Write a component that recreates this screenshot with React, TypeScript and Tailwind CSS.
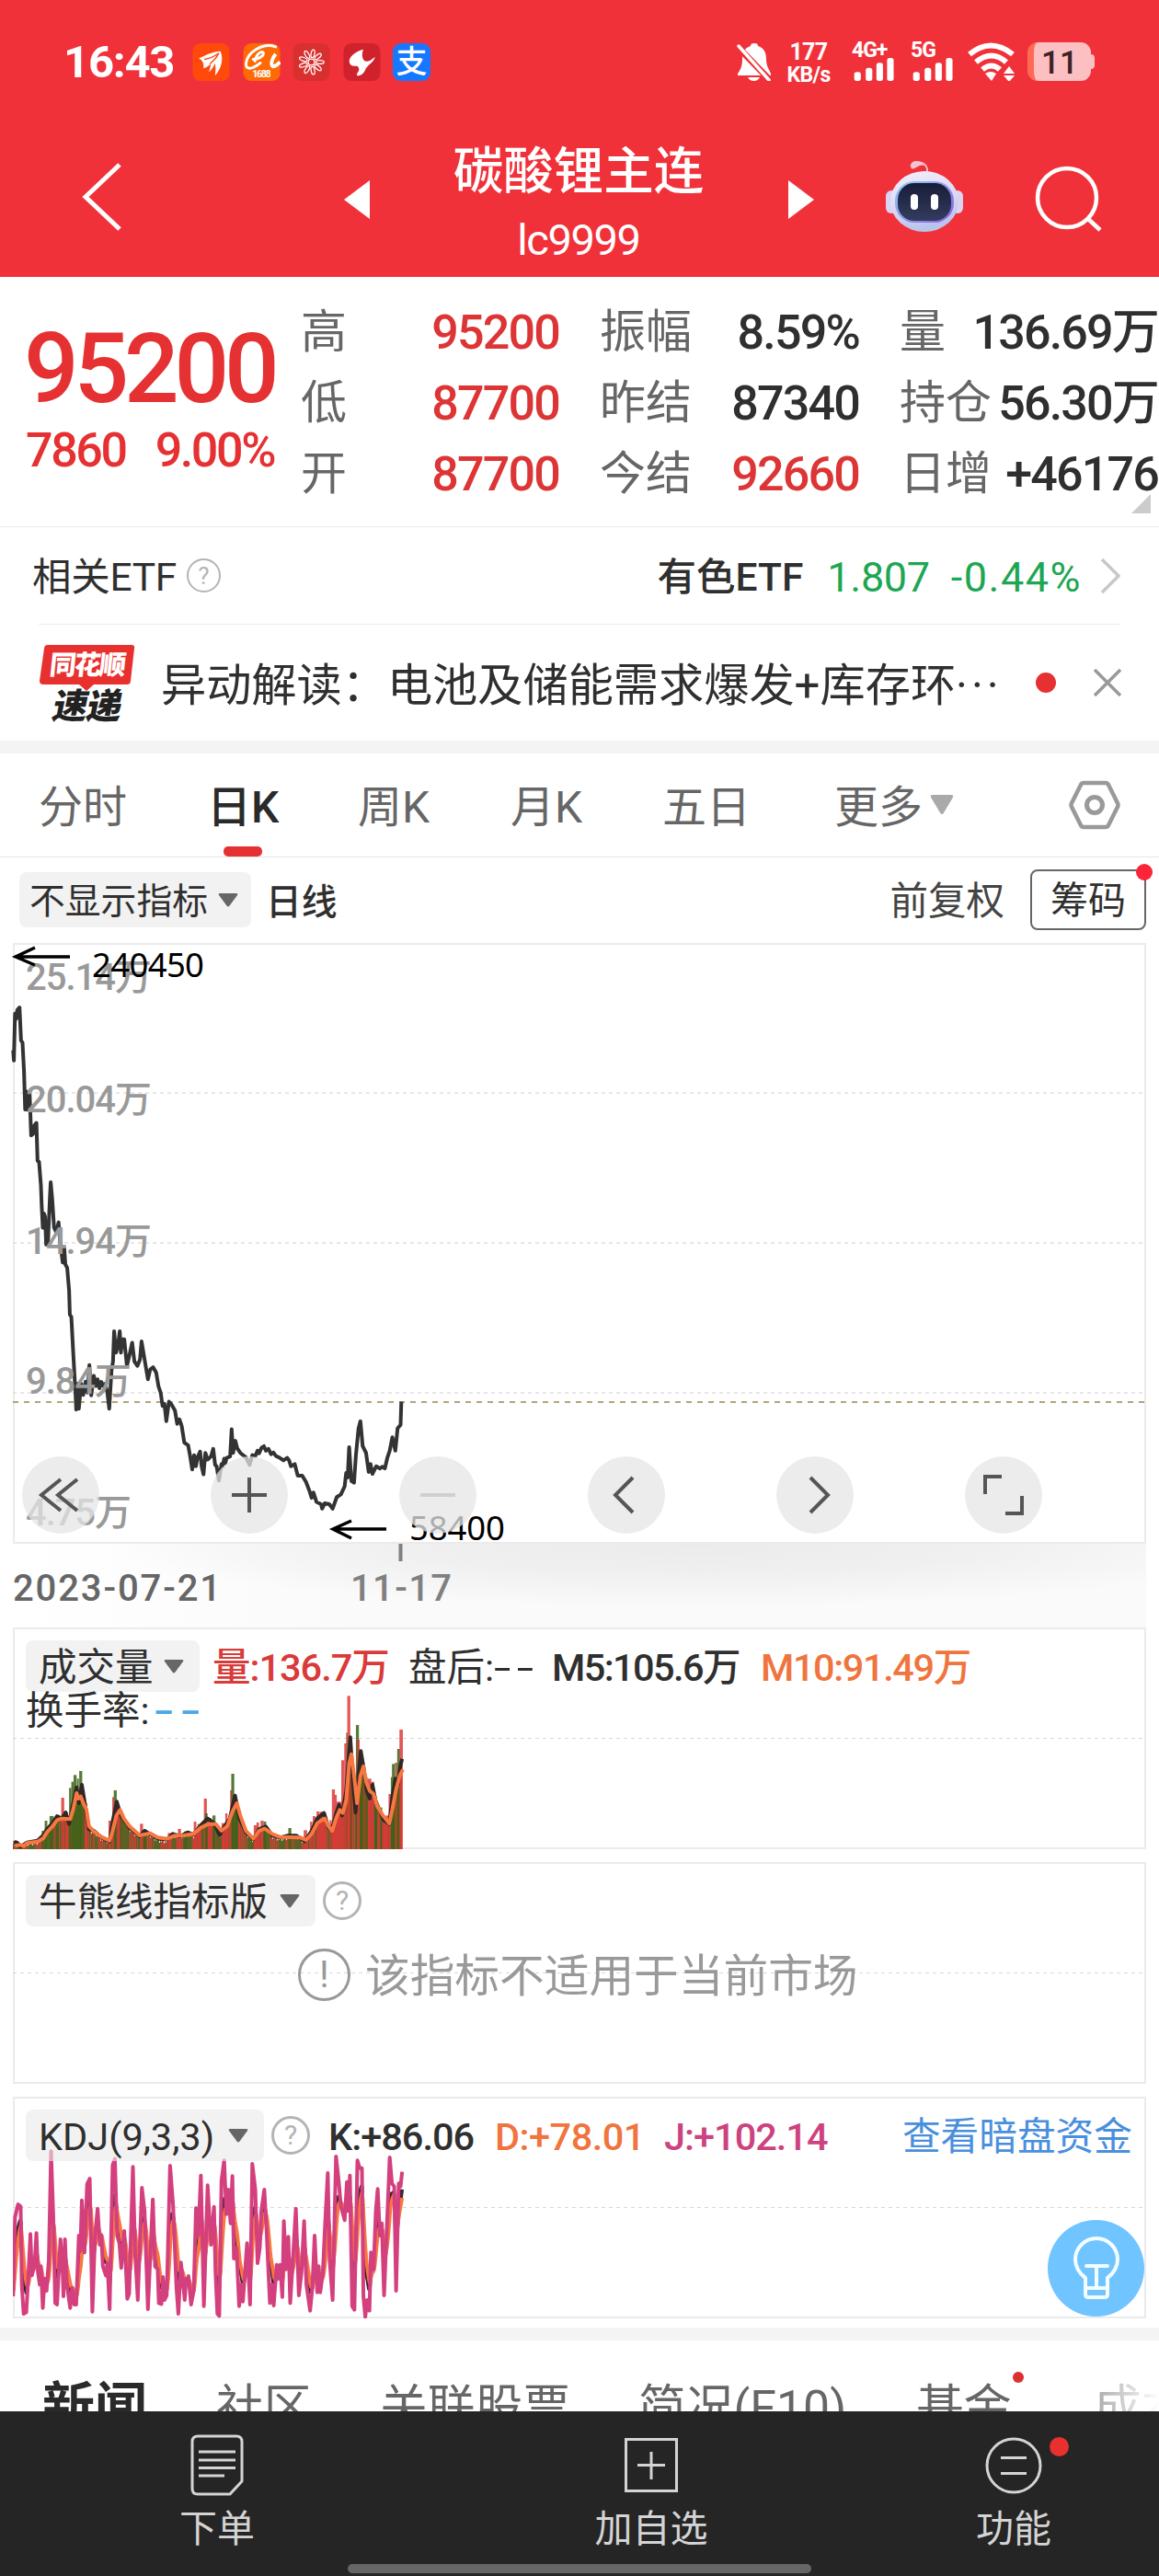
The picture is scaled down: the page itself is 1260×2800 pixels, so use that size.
import type { ReactNode } from "react";
import clsx from "clsx";

type Point = [number, number];

const PRICE: Point[] = [
  [35, 292], [37, 315], [40, 210], [43, 222], [46, 202], [52, 196], [56, 270], [60, 275], [64, 340], [67, 425],
  [71, 385], [73, 425], [79, 390], [83, 483], [88, 480], [92, 460], [97, 455], [100, 540], [104, 542], [109, 595],
  [111, 640], [114, 690], [117, 658], [120, 665], [123, 728], [128, 720], [133, 620], [135, 588], [139, 625], [144, 690],
  [150, 700], [156, 678], [160, 720], [167, 768], [171, 735], [174, 772], [179, 780], [184, 830], [186, 885], [190, 890],
  [196, 985], [201, 1060], [203, 1098], [208, 1040], [210, 1096], [216, 1040], [222, 1065], [228, 1035], [233, 1060], [238, 998],
  [243, 1066], [250, 1022], [256, 1045], [260, 1030], [265, 1050], [270, 1036], [275, 1045], [280, 1040], [286, 1060], [291, 1096],
  [297, 1010], [301, 990], [304, 922], [309, 970], [314, 955], [319, 922], [322, 970], [326, 940], [331, 940], [338, 1000],
  [345, 975], [352, 948], [358, 990], [366, 1000], [373, 985], [377, 945], [383, 975], [388, 1000], [394, 1030], [400, 1008],
  [408, 1003], [416, 1015], [422, 1045], [428, 1060], [433, 1090], [438, 1085], [443, 1124], [450, 1080], [458, 1088], [466, 1100],
  [472, 1130], [478, 1120], [484, 1135], [491, 1172], [501, 1178], [506, 1200], [512, 1232], [517, 1200], [522, 1225], [526, 1205],
  [533, 1192], [537, 1225], [542, 1243], [547, 1195], [553, 1210], [562, 1203], [568, 1186], [573, 1222], [577, 1225], [583, 1257],
  [590, 1220], [593, 1226], [597, 1208], [600, 1218], [604, 1206], [613, 1203], [617, 1142], [621, 1195], [627, 1168], [632, 1185],
  [640, 1195], [655, 1205], [665, 1222], [672, 1200], [680, 1202], [686, 1190], [690, 1196], [697, 1183], [703, 1180], [708, 1190],
  [715, 1186], [722, 1198], [728, 1194], [735, 1202], [745, 1206], [755, 1212], [765, 1206], [770, 1212], [775, 1225], [785, 1220],
  [793, 1246], [805, 1246], [815, 1260], [825, 1282], [830, 1296], [835, 1284], [843, 1305], [855, 1310], [858, 1320], [865, 1308],
  [877, 1310], [886, 1320], [897, 1294], [908, 1288], [918, 1270], [922, 1240], [926, 1250], [930, 1182], [936, 1258], [943, 1262],
  [948, 1200], [955, 1140], [960, 1124], [966, 1180], [975, 1195], [982, 1238], [987, 1220], [992, 1242], [1002, 1225], [1012, 1230],
  [1018, 1226], [1025, 1230], [1032, 1205], [1038, 1190], [1045, 1160], [1053, 1190], [1059, 1140], [1067, 1132], [1069, 1080],
];

const MA5: Point[] = [
  [36, 730], [45, 728], [55, 742], [72, 728], [100, 722], [115, 705], [125, 685], [140, 665], [152, 642], [165, 650],
  [175, 630], [184, 668], [195, 600], [204, 548], [210, 600], [218, 540], [226, 600], [237, 685], [250, 690], [270, 712],
  [292, 725], [300, 660], [311, 595], [322, 640], [345, 680], [372, 708], [385, 690], [420, 716], [445, 718], [460, 700],
  [480, 708], [500, 695], [515, 702], [535, 672], [553, 650], [570, 665], [585, 704], [600, 672], [612, 650], [626, 575],
  [638, 650], [655, 695], [675, 718], [690, 685], [708, 676], [725, 705], [745, 712], [765, 706], [790, 706], [812, 724],
  [830, 690], [845, 650], [863, 632], [875, 680], [885, 680], [895, 635], [903, 605], [911, 640], [922, 560], [933, 385],
  [940, 520], [947, 630], [954, 520], [961, 430], [968, 480], [977, 560], [985, 585], [992, 540], [1000, 590], [1010, 620],
  [1022, 655], [1037, 668], [1045, 580], [1053, 520], [1060, 540], [1066, 480], [1071, 455],
];

const MA10: Point[] = [
  [40, 738], [55, 736], [63, 740], [72, 730], [100, 725], [115, 715], [125, 695], [140, 675], [152, 655], [165, 650],
  [187, 652], [195, 620], [204, 567], [209, 585], [215, 578], [222, 600], [230, 620], [237, 675], [250, 692], [270, 710],
  [292, 722], [300, 690], [310, 640], [320, 622], [330, 650], [345, 675], [372, 705], [400, 698], [420, 712], [445, 716],
  [465, 706], [490, 705], [515, 700], [535, 680], [555, 668], [575, 668], [590, 690], [605, 675], [620, 625], [631, 600],
  [640, 640], [655, 690], [675, 716], [690, 690], [705, 683], [725, 700], [745, 710], [800, 712], [815, 720], [830, 700],
  [845, 665], [865, 650], [875, 675], [885, 690], [895, 650], [905, 622], [913, 632], [922, 590], [930, 470], [936, 440],
  [944, 520], [951, 600], [960, 510], [968, 480], [975, 530], [985, 560], [995, 570], [1005, 610], [1020, 640], [1037, 666],
  [1045, 620], [1055, 555], [1065, 510], [1073, 490],
];

const RED = "#dc3838";
const GREEN = "#3a6316";

// x, top, width, colour
const SPIKES: [number, number, number, string][] = [
  [38, 720, 6, RED], [111, 690, 6, GREEN], [119, 657, 7, GREEN], [132, 642, 11, GREEN], [148, 640, 8, GREEN], [163, 582, 8, RED],
  [173, 630, 7, RED], [184, 550, 6, GREEN], [190, 530, 6, GREEN], [196, 508, 8, GREEN], [205, 520, 5, GREEN], [211, 495, 8, GREEN],
  [220, 570, 5, GREEN], [225, 600, 7, RED], [248, 688, 4, RED], [289, 657, 7, RED], [299, 580, 5, RED], [303, 558, 8, GREEN],
  [312, 610, 6, RED], [320, 640, 5, GREEN], [373, 667, 8, RED], [382, 686, 8, GREEN], [447, 697, 10, RED], [474, 684, 8, RED],
  [490, 692, 8, GREEN], [516, 660, 7, RED], [526, 668, 10, RED], [543, 585, 8, RED], [546, 633, 7, GREEN], [556, 648, 7, RED],
  [566, 640, 8, GREEN], [590, 665, 9, RED], [600, 633, 6, RED], [613, 558, 5, RED], [616, 504, 8, GREEN], [626, 590, 6, GREEN],
  [635, 632, 5, RED], [676, 672, 8, RED], [683, 663, 7, RED], [694, 657, 8, RED], [702, 660, 7, GREEN], [768, 681, 8, GREEN],
  [809, 688, 9, RED], [826, 660, 6, RED], [833, 642, 7, RED], [843, 627, 8, RED], [852, 628, 8, RED], [861, 636, 7, RED],
  [868, 660, 5, RED], [878, 655, 5, RED], [884, 555, 8, RED], [891, 573, 6, RED], [897, 595, 12, RED], [909, 460, 8, RED],
  [917, 405, 6, RED], [922, 370, 4, "#a04a24"], [925, 250, 8, RED], [932, 440, 6, "#7a4a1c"], [948, 345, 8, GREEN], [951, 393, 7, RED],
  [958, 450, 8, GREEN], [966, 480, 7, "#8a4a20"], [974, 515, 5, GREEN], [980, 520, 9, RED], [989, 530, 8, RED], [997, 600, 7, GREEN],
  [1005, 615, 6, RED], [1013, 614, 5, GREEN], [1019, 650, 9, RED], [1028, 640, 7, RED], [1035, 570, 7, RED], [1041, 515, 4, GREEN],
  [1044, 472, 8, GREEN], [1052, 468, 6, "#a04a24"], [1058, 423, 7, GREEN], [1064, 360, 9, RED],
];

const KDJ_J: Point[] = [
  [35, 678], [40, 420], [48, 378], [55, 385], [58, 640], [63, 735], [70, 730], [76, 600], [81, 475], [85, 610],
  [92, 575], [97, 472], [101, 600], [106, 640], [109, 580], [114, 716], [119, 620], [124, 660], [130, 560], [136, 205],
  [142, 420], [147, 700], [152, 705], [161, 492], [167, 600], [169, 678], [173, 492], [178, 640], [187, 716], [192, 650],
  [198, 705], [203, 705], [210, 480], [214, 530], [218, 365], [225, 535], [232, 312], [239, 294], [246, 728], [253, 480],
  [260, 392], [266, 510], [270, 480], [274, 580], [282, 610], [286, 570], [292, 720], [300, 250], [306, 230], [312, 480],
  [318, 505], [323, 585], [331, 465], [339, 686], [344, 670], [354, 256], [360, 540], [367, 690], [378, 324], [385, 400],
  [394, 720], [407, 362], [413, 580], [420, 590], [423, 700], [430, 703], [434, 615], [438, 690], [444, 675], [453, 252],
  [461, 380], [470, 650], [475, 735], [482, 568], [488, 640], [492, 690], [496, 620], [500, 635], [502, 612], [509, 705],
  [516, 660], [522, 390], [528, 480], [535, 284], [543, 710], [553, 316], [562, 510], [570, 386], [574, 600], [579, 735],
  [584, 742], [590, 300], [597, 235], [603, 410], [608, 330], [614, 440], [619, 286], [623, 555], [630, 520], [637, 710],
  [642, 640], [647, 695], [658, 505], [666, 705], [672, 246], [680, 330], [686, 570], [692, 520], [696, 400], [704, 330],
  [710, 460], [715, 600], [719, 700], [724, 640], [729, 708], [737, 575], [742, 620], [746, 575], [752, 680], [756, 433],
  [762, 590], [768, 484], [773, 700], [780, 560], [788, 392], [796, 675], [803, 600], [810, 433], [816, 640], [826, 725],
  [832, 650], [838, 480], [845, 665], [849, 580], [853, 665], [860, 600], [866, 440], [873, 276], [878, 560], [886, 690],
  [895, 222], [902, 300], [908, 385], [918, 430], [924, 305], [928, 400], [932, 284], [938, 710], [944, 722], [952, 235],
  [958, 260], [964, 260], [968, 680], [973, 745], [978, 690], [984, 725], [988, 535], [995, 590], [1001, 400], [1006, 328],
  [1012, 480], [1017, 440], [1023, 675], [1038, 225], [1044, 310], [1050, 320], [1055, 660], [1062, 310], [1067, 320], [1071, 272],
];

const toPoints = (points: Point[]) => points.map((p) => p.join(",")).join(" ");

function valueAt(points: Point[], x: number) {
  const i = points.findIndex((p) => p[0] >= x);
  if (i === 0) return points[0][1];
  if (i < 0) return points[points.length - 1][1];
  const [x0, y0] = points[i - 1];
  const [x1, y1] = points[i];
  return y0 + ((y1 - y0) * (x - x0)) / (x1 - x0);
}

// K and D follow from J: J = 3K - 2D, D = 2/3 D' + 1/3 K
function kdLines() {
  const k: Point[] = [];
  const d: Point[] = [];
  let last = 650;
  for (let x = 35; x <= 1071; x += 1.84) {
    const j = valueAt(KDJ_J, x);
    last = (6 * last + j) / 7;
    d.push([x, last]);
    k.push([x, (j + 2 * last) / 3]);
  }
  return { k, d };
}

const { k: KDJ_K, d: KDJ_D } = kdLines();

const BARS = Array.from({ length: 424 }, (_, i) => {
  const x = 32 + i * 2.45;
  const noise = ((i * 7919) % 101) / 101;
  const top = valueAt(MA5, x) + 18 * (noise - 0.25);
  const tint = (i * 48271) % 17;
  return {
    x,
    top: Math.min(top, 742),
    color: tint < 5 ? "#c23a2c" : tint < 10 ? GREEN : tint < 14 ? "#8c471f" : "#6a4f18",
  };
});

function Line({ points, color, width = 4 }: { points: Point[]; color: string; width?: number }) {
  return (
    <polyline
      points={toPoints(points)}
      fill="none"
      stroke={color}
      strokeWidth={width}
      strokeLinejoin="round"
      vectorEffect="non-scaling-stroke"
    />
  );
}

function Caret({ className }: { className?: string }) {
  return (
    <svg viewBox="0 0 22 15" className={clsx("shrink-0", className)} fill="currentColor" preserveAspectRatio="none">
      <path d="M2 0h18q2 0 1 2l-8.500 11.500q-1.500 2-3 0L1 2q-1-2 1-2z" />
    </svg>
  );
}

function Help({ className }: { className?: string }) {
  return (
    <span
      className={clsx(
        "flex shrink-0 items-center justify-center rounded-full border-[#b4b4b4] text-[#b4b4b4] leading-none",
        className,
      )}
    >
      ?
    </span>
  );
}

function Signal({ label }: { label: string }) {
  return (
    <div className="flex h-[42px] w-[52px] flex-col justify-between">
      <span className="text-[23px] leading-[17px] font-bold tracking-[-1px]">{label}</span>
      <svg viewBox="0 0 50 28" className="h-[28px] w-[50px]" fill="#fff">
        <rect x="0" y="17" width="8" height="11" rx="3" />
        <rect x="14" y="12" width="8" height="16" rx="3" />
        <rect x="27" y="6" width="8" height="22" rx="3" />
        <rect x="40" y="0" width="8" height="28" rx="3" />
      </svg>
    </div>
  );
}

function StatusBar() {
  return (
    <div className="flex h-[42px] items-center pl-[69px] text-white">
      <span className="w-[126px] pt-[2px] text-[49px] leading-[42px] font-bold tracking-[-1.200px]">16:43</span>
      <div className="ml-[14px] flex gap-[13.500px]">
        <svg viewBox="0 0 41 42" className="size-[41px]">
          <rect width="41" height="42" rx="9" fill="#ff4a0c" />
          <path d="M7 17C15 13 23 9 31 9q5 14-6 27 1-8 0-14-3 7-7 10 2-6 2-9-4 4-8 5 1-8-5-11z" fill="#fff" />
          <path d="M13 18c7-1 12-4 16-7M19 23c5-4 8-7 10-12" stroke="#ff4a0c" strokeWidth="1.500" fill="none" />
        </svg>
        <svg viewBox="0 0 41 42" className="size-[41px]">
          <rect width="41" height="42" rx="9" fill="#fd6a06" />
          <path d="M36 4C22-1 4 10 3 23c0 8 9 5 16-1M11 18c7 0 13-5 11-8-4-2-9 6-9 10" fill="none" stroke="#fff" strokeWidth="3" strokeLinecap="round" />
          <path d="M36 12c-4 5-6 12-3 14 3 0 5-2 8-5" fill="none" stroke="#fff" strokeWidth="4" />
          <text x="10" y="38" fontSize="11" fontWeight="700" fill="#fff" textLength="21">1688</text>
        </svg>
        <svg viewBox="0 0 41 42" className="size-[41px]">
          <rect width="41" height="42" rx="9" fill="#d8302f" />
          <g fill="none" stroke="#fff" strokeWidth="1.300">
            {[10, 50, 90, 130, 170, 210, 250, 290, 330].map((angle) => (
              <ellipse key={angle} cx="20.500" cy="11.500" rx="2" ry="4.500" transform={`rotate(${angle} 20.500 21)`} />
            ))}
            <circle cx="20.500" cy="21" r="3.500" />
          </g>
        </svg>
        <svg viewBox="0 0 41 42" className="size-[41px]">
          <rect width="41" height="42" rx="9" fill="#d0222c" />
          <path d="M22 7C11 10 3 18 8 24c4 3 8-1 9 4 1 4-3 5-2 8 5 1 8-3 10-8 3-5 9-7 10-13-5 5-11 7-13 3-2-4-1-8 0-11z" fill="#fff" />
        </svg>
        <span className="flex size-[41px] items-center justify-center rounded-[9px] bg-[#1677ff] text-[34px] leading-none font-medium">
          支
        </span>
      </div>
      <svg viewBox="0 0 37 42" className="ml-[333px] h-[42px] w-[37px]">
        <path d="M19 1c3 0 4 1 4 3 7 2 9 8 9 14 0 8 3 11 5 16v2H1v-2c3-4 5-8 5-16 0-6 2-12 9-14 0-2 1-3 4-3zM12 38h13q-2 4-6.500 4T12 38z" fill="#fff" />
        <path d="M0 4l36 37" stroke="#f13139" strokeWidth="7" />
        <path d="M2 4l33 37" stroke="#fff" strokeWidth="3.500" strokeLinecap="round" />
      </svg>
      <div className="ml-[12px] flex w-[58px] flex-col items-center pt-[3px] text-[25px] leading-[25px] font-bold tracking-[-0.600px]">
        <span>177</span>
        <span className="text-[23px]">KB/s</span>
      </div>
      <div className="ml-[18px] flex gap-[12px]">
        <Signal label="4G+" />
        <Signal label="5G" />
      </div>
      <svg viewBox="0 0 51 42" className="ml-[10px] h-[42px] w-[51px]">
        <g fill="none" stroke="#fff" strokeWidth="6">
          <path d="M2 13q23-19 47 0" />
          <path d="M9 21.500q17-14 33 0" />
          <path d="M16 29.500q10-8 19 0" />
        </g>
        <path d="M19 34q6-4 12 0l-5 8z" fill="#fff" />
        <path d="M45 26l6 8H39zM39 36h12l-6 7z" fill="#fff" />
      </svg>
      <div className="ml-[14px] flex items-center">
        <div className="flex h-[42px] w-[69px] items-center justify-center rounded-[11px] border-l-[7px] border-[#ff6a55] bg-[#fdc0c2] pt-[2px] pr-[6px] text-[35px] leading-none font-medium text-[#3c2325]">
          11
        </div>
        <div className="h-[16px] w-[4px] rounded-r-full bg-[#fdc0c2]" />
      </div>
    </div>
  );
}

function Robot() {
  return (
    <svg viewBox="0 0 84 78" className="h-[78px] w-[84px]">
      <defs>
        <linearGradient id="shell" x1="0" y1="0" x2="0.300" y2="1">
          <stop offset="0" stopColor="#f4f0ff" />
          <stop offset="0.600" stopColor="#dcd8f4" />
          <stop offset="1" stopColor="#b9c4ea" />
        </linearGradient>
        <linearGradient id="rim" x1="0" y1="0" x2="1" y2="1">
          <stop offset="0" stopColor="#8fd0f0" />
          <stop offset="1" stopColor="#8a5be0" />
        </linearGradient>
        <linearGradient id="face" x1="0" y1="0" x2="0" y2="1">
          <stop offset="0" stopColor="#171c38" />
          <stop offset="1" stopColor="#343d5e" />
        </linearGradient>
      </defs>
      <path d="M44 13c1-7-2-10-7-8-4 1-6 5-9 3-3-3 0-8 5-8 9 0 14 5 13 13z" fill="#f0c4d0" />
      <rect x="0" y="32" width="12" height="25" rx="6" fill="#d9d4f2" />
      <rect x="72" y="32" width="12" height="25" rx="6" fill="#d9d4f2" />
      <ellipse cx="42" cy="44" rx="37" ry="33" fill="url(#shell)" />
      <rect x="10" y="22" width="64" height="45" rx="21" fill="url(#rim)" />
      <rect x="13" y="24" width="58" height="41" rx="18" fill="url(#face)" />
      <rect x="27" y="36" width="8" height="17" rx="4" fill="#fff" />
      <rect x="49" y="36" width="8" height="17" rx="4" fill="#fff" />
    </svg>
  );
}

function Header() {
  return (
    <header className="h-[301px] bg-[#f13139] pt-[46px] text-white">
      <StatusBar />
      <div className="flex h-[140px] items-start pt-[64px] pl-[88px]">
        <svg viewBox="0 0 46 76" className="mt-[24px] h-[76px] w-[46px]" fill="none" stroke="#fff" strokeWidth="5">
          <path d="M42 3L5 38l37 35" />
        </svg>
        <svg viewBox="0 0 28 42" className="mt-[44px] ml-[240px] h-[42px] w-[28px]" fill="#fff">
          <path d="M28 0v42L0 21z" />
        </svg>
        <div className="ml-[87px] flex w-[280px] flex-col items-center pt-[2px]">
          <h1 className="text-[54.500px] leading-[64px] font-medium">碳酸锂主连</h1>
          <p className="mt-[13px] text-[47px] leading-[60px] tracking-[-1.400px]">lc9999</p>
        </div>
        <svg viewBox="0 0 28 42" className="mt-[44px] ml-[88px] h-[42px] w-[28px]" fill="#fff">
          <path d="M0 0v42l28-21z" />
        </svg>
        <div className="mt-[23px] ml-[78px]">
          <Robot />
        </div>
        <svg viewBox="0 0 74 74" className="mt-[28px] ml-[78px] size-[74px]" fill="none" stroke="#fff" strokeWidth="4.500">
          <circle cx="35" cy="35" r="32" />
          <path d="M58 58l13 12" />
        </svg>
      </div>
    </header>
  );
}

const STATS: { width: string; rows: [string, string, boolean][] }[] = [
  {
    width: "ml-[327px] w-[281px]",
    rows: [["高", "95200", true], ["低", "87700", true], ["开", "87700", true]],
  },
  {
    width: "ml-[44px] w-[282px]",
    rows: [["振幅", "8.59%", false], ["昨结", "87340", false], ["今结", "92660", true]],
  },
  {
    width: "ml-[44px] w-[281px]",
    rows: [["量", "136.69万", false], ["持仓", "56.30万", false], ["日增", "+46176", false]],
  },
];

function Quote() {
  return (
    <section className="relative flex h-[272px] border-b border-[#ebebeb] pt-[22px]">
      <div className="absolute top-[43px] left-[26px] text-[#e63133]">
        <div className="text-[105px] leading-[116px] font-medium tracking-[-5.200px]">95200</div>
        <div className="flex h-[60px] items-center gap-[32px] pl-[2px] text-[52px] font-medium tracking-[-2.400px]">
          <span>7860</span>
          <span>9.00%</span>
        </div>
      </div>
      {STATS.map((column) => (
        <dl key={column.width} className={clsx("shrink-0", column.width)}>
          {column.rows.map(([label, value, isUp]) => (
            <div key={label} className="flex h-[77px] items-center justify-between whitespace-nowrap">
              <dt className="text-[50px] text-[#666]">{label}</dt>
              <dd
                className={clsx(
                  "text-[52px] font-medium tracking-[-1.800px]",
                  isUp ? "text-[#dd3535]" : "text-[#2f2f2f]",
                )}
              >
                {value}
              </dd>
            </div>
          ))}
        </dl>
      ))}
      <svg viewBox="0 0 21 21" className="absolute top-[236px] left-[1230px] size-[21px]" fill="#ccc">
        <path d="M21 0v21H0z" />
      </svg>
    </section>
  );
}

function EtfRow() {
  return (
    <section className="mx-[42px] flex h-[106px] items-center border-b border-[#ececec] pt-[4px] text-[42.500px] text-[#2f2f2f]">
      <span className="-ml-[7px] tracking-[-0.300px]">相关ETF</span>
      <Help className="mb-[4px] ml-[11px] size-[37px] border-2 text-[26px]" />
      <span className="ml-auto font-medium">有色ETF</span>
      <span className="ml-[26px] text-[45px] tracking-[-0.300px] text-[#1ea653]">1.807</span>
      <span className="ml-[23px] text-[45px] tracking-[1.500px] text-[#1ea653]">-0.44%</span>
      <svg viewBox="0 0 22 38" className="mb-[4px] ml-[20px] h-[38px] w-[22px]" fill="none" stroke="#c8c8c8" strokeWidth="3.500">
        <path d="M2 1l18 18L2 37" />
      </svg>
    </section>
  );
}

function NewsRow() {
  return (
    <section className="flex h-[126px] items-center pl-[43px]">
      <div className="relative flex h-[84px] w-[104px] flex-col items-center">
        <svg viewBox="0 0 104 52" className="absolute inset-0 h-[52px] w-[104px]" fill="#e8302f">
          <path d="M9 1h91q4 0 3 4l-4 35q0 4-4 4H59l-8 7-8-7H4q-4 0-4-4L5 5q0-4 4-4z" />
        </svg>
        <span className="relative -skew-x-6 text-[29px] leading-[46px] font-black tracking-[-2px] text-white">同花顺</span>
        <span className="relative mt-[4px] -skew-x-12 text-[38px] leading-[36px] font-black tracking-[-1px] text-[#222]">速递</span>
      </div>
      <p className="ml-[28px] w-[914px] overflow-hidden pt-[5px] text-[49.200px] leading-[60px] whitespace-nowrap text-[#2f2f2f]">
        异动解读：电池及储能需求爆发+库存环<span className="tracking-[4px]">···</span>
      </p>
      <span className="ml-[37px] size-[22px] rounded-full bg-[#e63133]" />
      <svg viewBox="0 0 30 30" className="ml-[41px] size-[30px]" fill="none" stroke="#999" strokeWidth="3.500">
        <path d="M1 1l28 28M29 1L1 29" />
      </svg>
    </section>
  );
}

const PERIODS: [string, string][] = [
  ["分时", "ml-[42px] w-[183px]"],
  ["日K", "w-[164px]"],
  ["周K", "w-[166px]"],
  ["月K", "w-[165px]"],
  ["五日", "w-[187px]"],
];

function PeriodTabs() {
  return (
    <nav className="flex h-[113px] items-center border-b border-[#e6e6e6] text-[48px] text-[#666]">
      {PERIODS.map(([label, width]) => {
        const active = label === "日K";
        return (
          <div key={label} className={clsx("h-full", width)}>
            <span
              className={clsx(
                "relative flex h-full w-fit items-center pt-[6px]",
                active && "font-medium text-[#2a2a2a]",
              )}
            >
              {label}
              {active && (
                <span className="absolute bottom-0 left-[18px] h-[11px] w-[42px] rounded-[5px] bg-[#e63133]" />
              )}
            </span>
          </div>
        );
      })}
      <span className="pt-[6px]">更多</span>
      <Caret className="ml-[8px] h-[22px] w-[26px] text-[#aaa]" />
      <svg viewBox="0 0 56 54" className="ml-[125px] size-[56px]" fill="none" stroke="#999">
        <path d="M16 3h24q2 0 3 2l10 20q1 2 0 4L43 49q-1 2-3 2H16q-2 0-3-2L3 29q-1-2 0-4L13 5q1-2 3-2z" strokeWidth="4.500" />
        <circle cx="28" cy="27" r="8.500" strokeWidth="5" />
      </svg>
    </nav>
  );
}

function IndicatorRow() {
  return (
    <div className="flex h-[93px] items-center pb-[1px] pl-[21px] text-[38.800px] text-[#2f2f2f]">
      <div className="flex h-[60px] w-[252px] items-center rounded-[8px] bg-[#f2f2f2] pl-[11px]">
        <span className="pt-[4px]">不显示指标</span>
        <Caret className="ml-[11px] h-[15px] w-[22px] text-[#666]" />
      </div>
      <span className="ml-[16px] pt-[6px] font-medium">日线</span>
      <span className="ml-auto pt-[5px] text-[41.500px] text-[#444]">前复权</span>
      <div className="relative mr-[14px] ml-[28px] flex h-[66px] w-[126px] items-center justify-center rounded-[8px] border-2 border-[#666] pt-[4px] text-[41px]">
        筹码
        <span className="absolute -top-[8px] -right-[9px] size-[18px] rounded-full bg-[#fb2438]" />
      </div>
    </div>
  );
}

function Panel({ className, children }: { className?: string; children: ReactNode }) {
  return <section className={clsx("relative mx-[14px] ring-2 ring-[#ebebeb] ring-inset", className)}>{children}</section>;
}

function MidLine() {
  return <path d="M0 120.500H1232" stroke="#d8d8d8" strokeWidth="1" strokeDasharray="4 4" />;
}

const PRICE_LABELS: [string, number][] = [
  ["25.14万", 50.5], ["20.04万", 184], ["14.94万", 337.5], ["9.84万", 490], ["4.75万", 633],
];

const CONTROLS: ReactNode[] = [
  <path key="fast" d="M42 25L21 42l21 17M60 25L39 42l21 17" />,
  <path key="in" d="M23 42h38M42 23v38" />,
  <path key="out" d="M23 42h38" stroke="#d0d0d0" />,
  <path key="prev" d="M49 23L30 42l19 19" />,
  <path key="next" d="M37 23l19 19-19 19" />,
  <path key="full" d="M22 41V22h18M44 62h18V43" />,
];

function PriceChart() {
  return (
    <Panel className="h-[653px]">
      <svg viewBox="0 0 1232 653" className="absolute inset-0 h-[653px] w-[1232px] overflow-visible">
        <g stroke="#e0e0e0" strokeWidth="1.500" strokeDasharray="4 4">
          <path d="M0 163H1232M0 326H1232M0 489H1232" />
        </g>
        <path d="M0 499H1232" stroke="#b5a27c" strokeWidth="2" strokeDasharray="6 6" />
        <g transform="translate(-14 -25) scale(0.40816 0.48471)">
          <Line points={PRICE} color="#333" />
        </g>
        <g fontSize="40" fill="#999" fontWeight="500">
          {PRICE_LABELS.map(([label, y]) => (
            <text key={label} x="14" y={y} textLength={label.length === 6 ? 137 : 115}>
              {label}
            </text>
          ))}
        </g>
        <g className="font-['Noto_Sans',sans-serif]" fontSize="36.500" fill="#000">
          <text x="86" y="37" textLength="122">
            240450
          </text>
          <text x="431" y="649" textLength="104">
            58400
          </text>
        </g>
        <g fill="none" stroke="#000" strokeWidth="3.500">
          <path d="M62 15H3M24 5L3 15l21 9" />
          <path d="M406 637H348M368 628l-20 9 20 10" />
        </g>
      </svg>
      <div className="absolute top-[558px] left-[10px] flex gap-[121px]">
        {CONTROLS.map((icon, i) => (
          <button key={i} className="size-[84px] rounded-full bg-[#e6e6e6]/75">
            <svg viewBox="0 0 84 84" className="size-[84px]" fill="none" stroke="#555" strokeWidth="4">
              {icon}
            </svg>
          </button>
        ))}
      </div>
    </Panel>
  );
}

function DateAxis() {
  return (
    <div className="mx-[14px] h-[91px] bg-linear-to-r from-white via-[#fafafa] via-30% to-[#fafafa]">
      <div className="h-full bg-[radial-gradient(ellipse_52%_75%_at_60%_0%,#ebebeb_0%,#f0f0f0_50%,transparent_100%)]">
        <svg viewBox="0 0 1232 91" className="h-[91px] w-[1232px]" fontSize="40" fontWeight="500">
          <text x="0" y="62" fill="#666" textLength="226">
            2023-07-21
          </text>
          <text x="367" y="62" fill="#808080" textLength="110">
            11-17
          </text>
          <path d="M421.500 0v19" stroke="#808080" strokeWidth="4" />
        </svg>
      </div>
    </div>
  );
}

function Pill({ width, children }: { width: string; children: ReactNode }) {
  return (
    <div
      className={clsx(
        "flex h-[56px] items-center justify-between rounded-[8px] bg-[#e9e9e9]/60 pr-[17px] pl-[14px] whitespace-nowrap text-[#2f2f2f]",
        width,
      )}
    >
      <span className="pt-[4px]">{children}</span>
      <Caret className="h-[15px] w-[22px] text-[#666]" />
    </div>
  );
}

function Dashes({ className }: { className?: string }) {
  return <span className={clsx("inline-block origin-left scale-x-[1.6] tracking-[4px]", className)}>--</span>;
}

function VolumePanel() {
  return (
    <Panel className="h-[241px] pt-[14px] pl-[14px] text-[41.500px] text-[#2f2f2f]">
      <svg viewBox="0 0 1232 241" className="absolute inset-0 h-[241px] w-[1232px]">
        <MidLine />
        <g transform="translate(-14 -9) scale(0.40816 0.33333)">
          {BARS.map((bar) => (
            <rect key={bar.x} x={bar.x} y={bar.top} width="2.450" height={750 - bar.top} fill={bar.color} />
          ))}
          {SPIKES.map(([x, top, width, color]) => (
            <rect key={x} x={x} y={top} width={width} height={750 - top} fill={color} fillOpacity="0.850" />
          ))}
          <Line points={MA5} color="#2f2826" />
          <Line points={MA10} color="#f87741" />
        </g>
      </svg>
      <div className="relative flex h-[56px] items-center whitespace-nowrap">
        <Pill width="w-[189px]">成交量</Pill>
        <div className="flex pt-[5px]">
          <span className="ml-[14px] w-[213px] font-medium tracking-[-1px] text-[#d93a3a]">量:136.7万</span>
          <span className="w-[156px]">
            盘后:
            <Dashes />
          </span>
          <span className="w-[227px] font-medium tracking-[-1.600px]">M5:105.6万</span>
          <span className="font-medium tracking-[-1.400px] text-[#f0743e]">M10:91.49万</span>
        </div>
      </div>
      <div className="relative pt-[2px] leading-[38px]">
        换手率:
        <Dashes className="ml-[4px] font-medium text-[#4ba8e3]" />
      </div>
    </Panel>
  );
}

function BullBearPanel() {
  return (
    <Panel className="mt-[14px] h-[241px] pt-[14px] pl-[14px] text-[41.500px]">
      <svg viewBox="0 0 1232 241" className="absolute inset-0 h-[241px] w-[1232px]">
        <MidLine />
      </svg>
      <div className="relative flex h-[56px] items-center">
        <Pill width="w-[315px]">牛熊线指标版</Pill>
        <Help className="ml-[8px] size-[42px] border-[3px] text-[30px]" />
      </div>
      <div className="relative mt-[21px] ml-[296px] flex items-center text-[48.700px] leading-[58px] text-[#999]">
        <span className="mr-[16px] flex size-[57px] items-center justify-center rounded-full border-[3px] border-[#999] text-[40px] leading-none">
          !
        </span>
        <span className="pt-[5px]">该指标不适用于当前市场</span>
      </div>
    </Panel>
  );
}

function KdjPanel() {
  return (
    <Panel className="mt-[14px] h-[241px] pt-[14px] pl-[14px] text-[41.500px]">
      <svg viewBox="0 0 1232 241" className="absolute inset-0 h-[241px] w-[1232px]">
        <MidLine />
        <g transform="translate(-14 -9) scale(0.40816 0.33333)">
          <Line points={KDJ_K} color="#3a2430" />
          <Line points={KDJ_D} color="#f87741" />
          <Line points={KDJ_J} color="#d43f7d" />
        </g>
      </svg>
      <div className="relative flex h-[56px] items-center whitespace-nowrap">
        <Pill width="w-[259px]">KDJ(9,3,3)</Pill>
        <Help className="ml-[8px] size-[42px] border-[3px] text-[30px]" />
        <div className="flex grow pt-[5px]">
          <span className="ml-[20px] w-[181px] font-medium tracking-[-1px] text-[#2f2f2f]">K:+86.06</span>
          <span className="w-[184px] font-medium tracking-[-0.500px] text-[#f0743e]">D:+78.01</span>
          <span className="font-medium tracking-[-1px] text-[#cc4380]">J:+102.14</span>
          <span className="mr-[15px] ml-auto text-[41.700px] text-[#4a8fdd]">查看暗盘资金</span>
        </div>
      </div>
      <div className="absolute top-[134px] left-[1125px] flex size-[105px] items-center justify-center rounded-full bg-[#70c4ff]">
        <svg viewBox="0 0 50 68" className="mt-[-2px] h-[68px] w-[50px]" fill="none" stroke="#f4fdff" strokeWidth="4" strokeLinejoin="round" strokeLinecap="round">
          <path d="M13 45C6 40 2 32 2 25a23 23 0 0 1 46 0c0 7-4 15-11 20v18q0 3-3 3H16q-3 0-3-3z" />
          <path d="M14 32h23M25 32v24M13 56h24" />
        </svg>
      </div>
    </Panel>
  );
}

function ContentTabs() {
  return (
    <div className="relative flex h-[77px] items-start overflow-hidden pt-[43px] pl-[46px] text-[51.800px] leading-[62px] whitespace-nowrap text-[#666]">
      <span className="-mt-[1px] w-[189px] shrink-0 text-[57px] font-bold text-[#2a2a2a]">新闻</span>
      <span className="w-[178px] shrink-0">社区</span>
      <span className="w-[281px] shrink-0">关联股票</span>
      <span className="w-[302px] shrink-0">简况(F10)</span>
      <span className="relative w-[193px] shrink-0">
        基金
        <span className="absolute top-[-9px] left-[105px] size-[12px] rounded-full bg-[#dd3030]" />
      </span>
      <span className="shrink-0">成本</span>
      <div className="absolute top-0 right-0 h-full w-[100px] bg-linear-to-r from-white/20 to-white" />
    </div>
  );
}

function BottomBar() {
  return (
    <footer className="flex h-[179px] flex-col bg-[#252525] text-[41px] leading-[50px] text-[#d4d4d4]">
      <div className="flex h-[166px] pt-[25px]">
        <div className="flex w-[472px] flex-col items-center">
          <svg viewBox="0 0 58 68" className="h-[68px] w-[58px]" fill="none" stroke="#d4d4d4" strokeWidth="3">
            <path d="M8 2h42q6 0 6 6v43L43 65H8q-6 0-6-6V8q0-6 6-6z" />
            <path d="M9 19h40M9 28h40M9 36.500h40M9 45h28" />
          </svg>
          <span className="mt-[10px]">下单</span>
        </div>
        <div className="flex w-[472px] flex-col items-center">
          <svg viewBox="0 0 58 68" className="h-[68px] w-[58px]" fill="none" stroke="#d4d4d4" strokeWidth="3">
            <path d="M1.500 5.500h55v56h-55zM14 33.500h30M29 19v30" />
          </svg>
          <span className="mt-[10px]">加自选</span>
        </div>
        <div className="relative flex w-[316px] flex-col items-center">
          <svg viewBox="0 0 62 68" className="h-[68px] w-[62px]" fill="none" stroke="#d4d4d4" strokeWidth="3">
            <circle cx="31" cy="34" r="29" />
            <path d="M17 25.500h28M17 42.500h28" />
          </svg>
          <span className="mt-[10px]">功能</span>
          <span className="absolute top-[3px] left-[197px] size-[21px] rounded-full bg-[#e8302f]" />
        </div>
      </div>
      <div className="mx-auto h-[10px] w-[504px] rounded-full bg-[#666]" />
    </footer>
  );
}

export default function App() {
  return (
    <div className="h-[2800px] w-[1260px] overflow-hidden bg-white font-['Roboto','Noto_Sans_CJK_SC',sans-serif]">
      <Header />
      <Quote />
      <EtfRow />
      <NewsRow />
      <div className="h-[14px] bg-[#f4f4f4]" />
      <PeriodTabs />
      <IndicatorRow />
      <PriceChart />
      <DateAxis />
      <VolumePanel />
      <BullBearPanel />
      <KdjPanel />
      <div className="mt-[10px] h-[14px] bg-[#f4f4f4]" />
      <ContentTabs />
      <BottomBar />
    </div>
  );
}
